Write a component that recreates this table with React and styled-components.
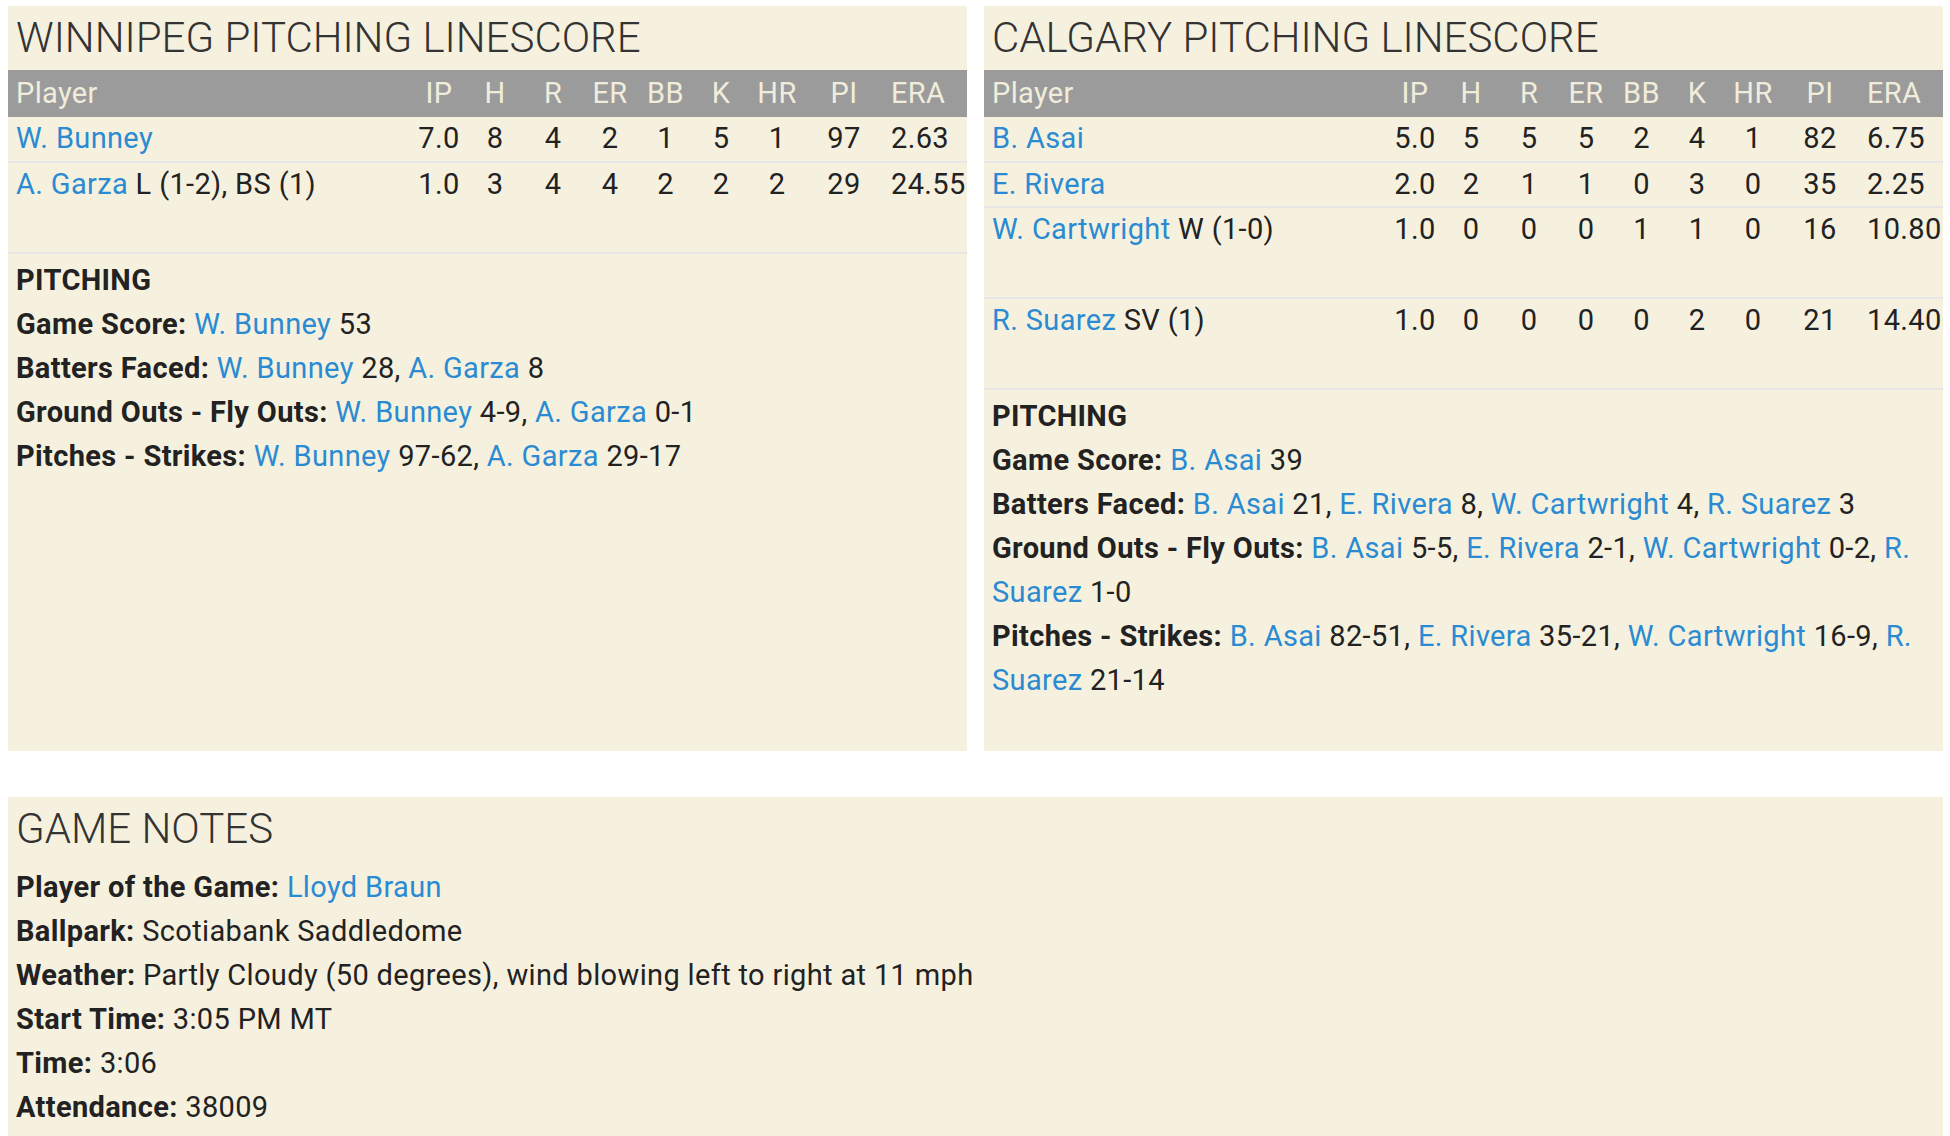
import React from "react";
import styled, { createGlobalStyle } from "styled-components";

const GlobalStyle = createGlobalStyle`
  html, body { margin: 0; padding: 0; background: #ffffff; }
  body { font-family: Roboto, "Noto Sans", "Liberation Sans", sans-serif; color: #222; }
`;

const Page = styled.div`
  padding: 6px 7px 0 8px;
  display: flex;
  flex-direction: column;
  gap: 46px;
`;

const TopRow = styled.div`
  display: flex;
  gap: 17px;
  align-items: stretch;
`;

const Panel = styled.section`
  flex: 1 1 0;
  min-width: 0;
  background: #f6f1df;
  padding-bottom: ${(p) => p.$bottom || 0}px;
`;

const Title = styled.h2`
  margin: 0 0 ${(p) => p.$gap || 2}px;
  padding: 2px 0 0 8px;
  font-weight: 300;
  font-size: 42px;
  line-height: 60px;
  color: #333;
  white-space: nowrap;
`;

const COLS = "1fr 54px 58px 58px 56px 55px 56px 56px 78px 84px";

const HeaderRow = styled.div`
  display: grid;
  grid-template-columns: ${COLS};
  height: 47px;
  background: #9b9b9b;
  color: #f1eddc;
  font-size: 29px;
  letter-spacing: 0.35px;
  line-height: 47px;
`;

const Row = styled.div`
  display: grid;
  grid-template-columns: ${COLS};
  height: ${(p) => (p.$tall ? 89 : 43.5)}px;
  border-bottom: 2px solid #e7e6e6;
  font-size: 29px;
  letter-spacing: 0.35px;
  line-height: 43px;
  color: #222;
`;

const Cell = styled.div`
  text-align: ${(p) => (p.$left ? "left" : "center")};
  padding-left: ${(p) => (p.$left ? 8 : 0)}px;
  white-space: nowrap;
`;

const NameCell = styled.div`
  padding-left: 8px;
  white-space: nowrap;
  overflow: hidden;
`;

const Link = styled.a`
  color: #2a8bd2;
  text-decoration: none;
  cursor: pointer;
`;

const Notes = styled.div`
  padding: 4px 8px 0;
  font-size: 29px;
  letter-spacing: 0.35px;
  line-height: 44px;
  color: #222;
`;

const NoteHeading = styled.div`
  font-weight: 700;
`;

const NoteLine = styled.div``;

const Label = styled.b`
  font-weight: 700;
`;

const HEAD = ["IP", "H", "R", "ER", "BB", "K", "HR", "PI", "ERA"];

const winnipeg = [
  { name: "W. Bunney", stats: ["7.0", "8", "4", "2", "1", "5", "1", "97", "2.63"] },
  { name: "A. Garza", note: "L (1-2), BS (1)", stats: ["1.0", "3", "4", "4", "2", "2", "2", "29", "24.55"], tall: true },
];

const calgary = [
  { name: "B. Asai", stats: ["5.0", "5", "5", "5", "2", "4", "1", "82", "6.75"] },
  { name: "E. Rivera", stats: ["2.0", "2", "1", "1", "0", "3", "0", "35", "2.25"] },
  { name: "W. Cartwright", note: "W (1-0)", stats: ["1.0", "0", "0", "0", "1", "1", "0", "16", "10.80"], tall: true },
  { name: "R. Suarez", note: "SV (1)", stats: ["1.0", "0", "0", "0", "0", "2", "0", "21", "14.40"], tall: true },
];

const winNotes = [
  { label: "Game Score:", items: [["W. Bunney", "53"]] },
  { label: "Batters Faced:", items: [["W. Bunney", "28"], ["A. Garza", "8"]] },
  { label: "Ground Outs - Fly Outs:", items: [["W. Bunney", "4-9"], ["A. Garza", "0-1"]] },
  { label: "Pitches - Strikes:", items: [["W. Bunney", "97-62"], ["A. Garza", "29-17"]] },
];

const calNotes = [
  { label: "Game Score:", items: [["B. Asai", "39"]] },
  { label: "Batters Faced:", items: [["B. Asai", "21"], ["E. Rivera", "8"], ["W. Cartwright", "4"], ["R. Suarez", "3"]] },
  { label: "Ground Outs - Fly Outs:", items: [["B. Asai", "5-5"], ["E. Rivera", "2-1"], ["W. Cartwright", "0-2"], ["R. Suarez", "1-0"]] },
  { label: "Pitches - Strikes:", items: [["B. Asai", "82-51"], ["E. Rivera", "35-21"], ["W. Cartwright", "16-9"], ["R. Suarez", "21-14"]] },
];

function LineScore({ title, rows, notes, bottom }) {
  return (
    <Panel $bottom={bottom}>
      <Title>{title}</Title>
      <HeaderRow>
        <NameCell>Player</NameCell>
        {HEAD.map((h, i) => (
          <Cell key={h} $left={i === HEAD.length - 1}>{h}</Cell>
        ))}
      </HeaderRow>
      {rows.map((r) => (
        <Row key={r.name} $tall={r.tall}>
          <NameCell>
            <Link>{r.name}</Link>
            {r.note ? ` ${r.note}` : ""}
          </NameCell>
          {r.stats.map((s, i) => (
            <Cell key={i} $left={i === r.stats.length - 1}>{s}</Cell>
          ))}
        </Row>
      ))}
      <Notes>
        <NoteHeading>PITCHING</NoteHeading>
        {notes.map((n) => (
          <NoteLine key={n.label}>
            <Label>{n.label}</Label>{" "}
            {n.items.map(([name, val], i) => (
              <React.Fragment key={name}>
                <Link>{name}</Link> {val}
                {i < n.items.length - 1 ? ", " : ""}
              </React.Fragment>
            ))}
          </NoteLine>
        ))}
      </Notes>
    </Panel>
  );
}

export default function App() {
  return (
    <>
      <GlobalStyle />
      <Page>
        <TopRow>
          <LineScore title="WINNIPEG PITCHING LINESCORE" rows={winnipeg} notes={winNotes} />
          <LineScore title="CALGARY PITCHING LINESCORE" rows={calgary} notes={calNotes} bottom={49} />
        </TopRow>
        <Panel $bottom={8}>
          <Title $gap={2}>GAME NOTES</Title>
          <Notes>
            <NoteLine>
              <Label>Player of the Game:</Label> <Link>Lloyd Braun</Link>
            </NoteLine>
            <NoteLine>
              <Label>Ballpark:</Label> Scotiabank Saddledome
            </NoteLine>
            <NoteLine>
              <Label>Weather:</Label> Partly Cloudy (50 degrees), wind blowing left to right at 11 mph
            </NoteLine>
            <NoteLine>
              <Label>Start Time:</Label> 3:05 PM MT
            </NoteLine>
            <NoteLine>
              <Label>Time:</Label> 3:06
            </NoteLine>
            <NoteLine>
              <Label>Attendance:</Label> 38009
            </NoteLine>
          </Notes>
        </Panel>
      </Page>
    </>
  );
}
